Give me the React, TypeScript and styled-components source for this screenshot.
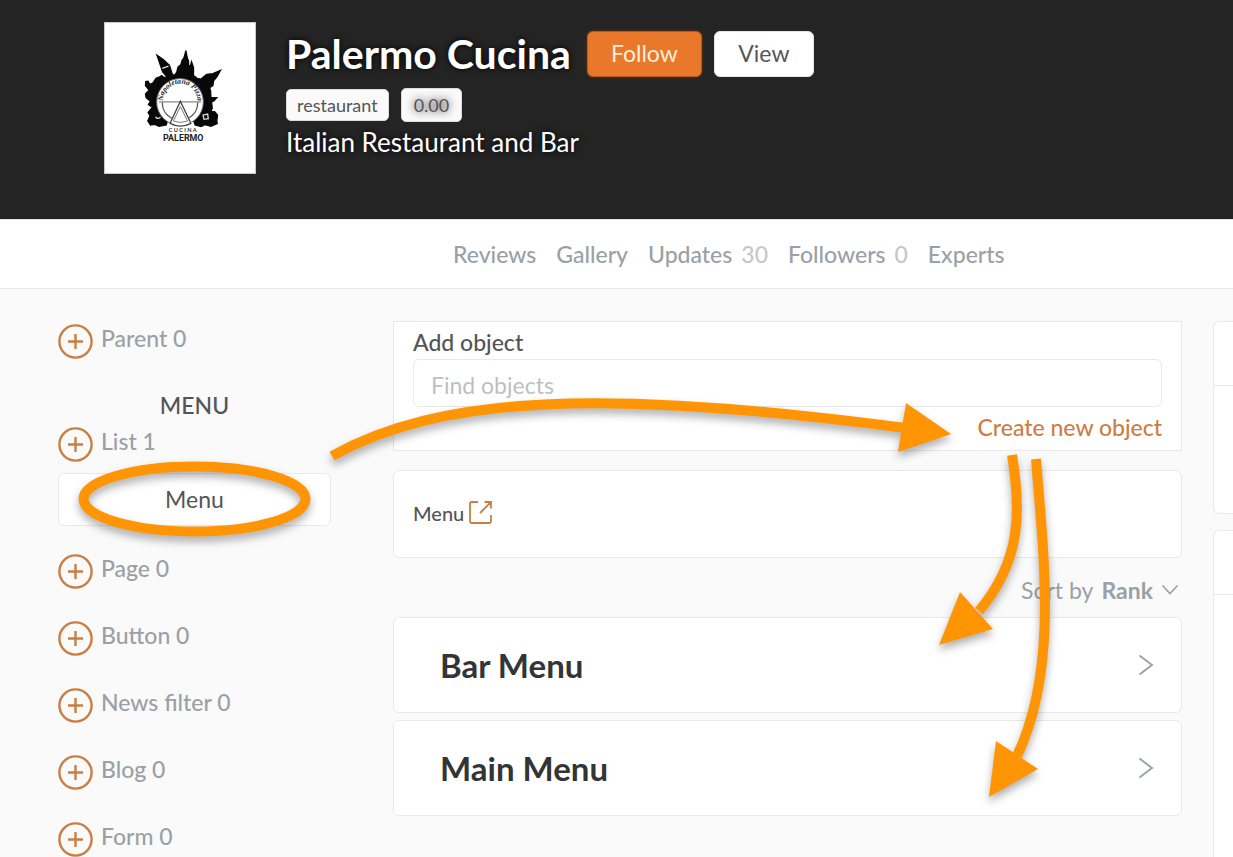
import React from "react";
import styled, { createGlobalStyle } from "styled-components";

const GlobalStyle = createGlobalStyle`
  *, *::before, *::after { box-sizing: border-box; }
  html, body { margin: 0; padding: 0; }
  body {
    background: #fafafa;
    color: #535557;
    font-family: Lato, "Liberation Sans", sans-serif;
    font-size: 23px;
    line-height: 32px;
  }
  button, input, select { font: inherit; color: inherit; }
  a { text-decoration: none; color: inherit; }
`;

const line = "#e7e9ea";
const muted = "#9aa1a6";
const accent = "#cb7e44";

const Page = styled.div`
  position: relative;
  display: flex;
  flex-direction: column;
  min-height: 100vh;
`;

const Header = styled.header`
  display: flex;
  gap: 30px;
  padding: 22px 24px 45px 104px;
  background: #242424;
`;

const Avatar = styled.div`
  flex: none;
  width: 152px;
  height: 152px;
  border: 1px solid #c8c8c8;
  background: #fff;

  svg { display: block; width: 100%; height: 100%; }
`;

const Identity = styled.div`
  color: #fff;
  text-shadow: 0 0 6px #000;
`;

const TitleRow = styled.div`
  display: flex;
  align-items: center;
  height: 63px;
`;

const Title = styled.h1`
  margin: 0 16px 0 0;
  font-size: 41px;
  line-height: 63px;
  font-weight: 700;
  white-space: nowrap;
`;

const HeaderButton = styled.button<{ $primary?: boolean; $width: number }>`
  width: ${(p) => p.$width}px;
  height: 46px;
  margin-right: 12px;
  padding: 0 0 2px;
  border: 1px solid ${(p) => (p.$primary ? "#b9581a" : "#e4e4e4")};
  border-radius: 6px;
  background: ${(p) => (p.$primary ? "#e9782a" : "#fff")};
  color: ${(p) => (p.$primary ? "#fdeedd" : "#55575a")};
  box-shadow: ${(p) => (p.$primary ? "0 0 3px #7a3300" : "none")};
`;

const Tags = styled.div`
  display: flex;
  align-items: center;
  gap: 12px;
  height: 39px;
`;

const Tag = styled.span<{ $glow?: boolean }>`
  padding: ${(p) => (p.$glow ? "3px 12px" : "2px 10px")};
  border: 1px solid #dcdcdc;
  border-radius: 5px;
  background: #fafafa;
  color: #555;
  font-size: 18px;
  line-height: 26px;
  text-shadow: ${(p) => (p.$glow ? "0 0 8px #000" : "none")};
`;

const Tagline = styled.p`
  margin: 0;
  font-size: 26px;
  line-height: 36px;
`;

const Nav = styled.nav`
  display: flex;
  align-items: center;
  gap: 20px;
  height: 70px;
  padding: 0 24px 0 453px;
  border-top: 1px solid #e2e2e2;
  border-bottom: 1px solid ${line};
  background: #fff;
  color: ${muted};
  font-weight: 500;
  white-space: nowrap;
`;

const NavCount = styled.span`
  margin-left: 9px;
  color: #c5c8ca;
`;

const Body = styled.div`
  flex: 1;
  display: grid;
  grid-template-columns: 273px minmax(0, 1fr) 20px;
  padding-left: 58px;
`;

const Sidebar = styled.aside`
  padding-top: 35px;
`;

const Group = styled.section`
  margin-bottom: 32px;
`;

const GroupRow = styled.div`
  display: flex;
  gap: 8px;
  height: 35px;
  color: ${muted};
  font-weight: 500;
  line-height: 28px;
`;

const AddButton = styled.button`
  flex: none;
  width: 35px;
  height: 35px;
  padding: 0;
  border: 0;
  background: none;
  color: ${accent};

  svg { display: block; }
`;

const SidebarTitle = styled.h2`
  margin: -2px 0 6px;
  font-size: 23px;
  line-height: 32px;
  font-weight: 500;
  text-align: center;
`;

const SidebarItem = styled.a`
  display: block;
  margin: 11px 0 28px;
  border: 1px solid ${line};
  border-radius: 6px;
  background: #fff;
  line-height: 51px;
  text-align: center;
`;

const Content = styled.main`
  padding: 32px 31px 0 62px;
`;

const AddCard = styled.section`
  display: flex;
  flex-direction: column;
  height: 130px;
  padding: 4px 19px 0;
  border: 1px solid ${line};
  background: #fff;
  font-weight: 500;
`;

const SearchInput = styled.input`
  width: 100%;
  height: 48px;
  margin-top: 1px;
  padding: 4px 17px 0;
  border: 1px solid ${line};
  border-radius: 6px;
  background: #fff;
  font-weight: 400;

  &::placeholder { color: #bdbfc1; opacity: 1; }
`;

const CreateLink = styled.a`
  align-self: flex-end;
  margin-top: 4px;
  color: ${accent};
`;

const CrumbCard = styled.section`
  display: flex;
  align-items: center;
  gap: 4px;
  height: 88px;
  margin-top: 19px;
  padding: 0 19px 2px;
  border: 1px solid ${line};
  border-radius: 6px;
  background: #fff;
  font-size: 20px;
  font-weight: 500;
`;

const OpenLink = styled.a`
  color: ${accent};

  svg { display: block; }
`;

const SortRow = styled.div`
  display: flex;
  justify-content: flex-end;
  align-items: center;
  gap: 8px;
  height: 59px;
  padding: 5px 3px 0 0;
  color: ${muted};
`;

const SortSelect = styled.select`
  appearance: none;
  field-sizing: content;
  padding: 0;
  border: 0;
  background: none;
  font-weight: 700;
`;

const MenuCard = styled.a`
  display: flex;
  align-items: center;
  justify-content: space-between;
  height: 96px;
  margin-bottom: 7px;
  padding: 0 27px 0 46px;
  border: 1px solid ${line};
  border-radius: 6px;
  background: #fff;
  color: ${muted};
`;

const MenuName = styled.h3`
  margin: 0;
  color: #333436;
  font-size: 33px;
  line-height: 48px;
  font-weight: 700;
`;

const Rail = styled.aside`
  display: flex;
  flex-direction: column;
  gap: 16px;
  padding-top: 32px;
`;

const RailCard = styled.section<{ $grow?: boolean }>`
  border: 1px solid ${line};
  border-right: 0;
  border-radius: ${(p) => (p.$grow ? "6px 0 0 0" : "6px 0 0 6px")};
  background: #fff;
  ${(p) => (p.$grow ? "flex: 1; border-bottom: 0;" : "height: 193px;")}
`;

const RailHead = styled.div`
  height: 64px;
  border-bottom: 1px solid ${line};
`;

const Annotations = styled.svg`
  position: absolute;
  inset: 0;
  width: 100%;
  height: 100%;
  pointer-events: none;
  filter: drop-shadow(0 5px 4px rgba(0, 0, 0, 0.32));
`;

function Logo() {
  return (
    <svg viewBox="12 20 456 456" role="img" aria-label="Napoletana Pizza Cucina Palermo">
      <path
        fill="#080808"
        stroke="#080808"
        strokeWidth="4"
        d="M150 330 142 318 149 302 143 292 156 276 144 268 150 258 137 247 135 236 146 224 135 210 136 198 143 197 148 207 158 202 167 188 178 184 184 180 192 186 200 184 187 168 181 150 170 118 189 131 208 149 216 174 222 180 230 170 234 154 243 146 246 134 252 126 258 104 262 126 266 136 266 150 272 150 275 138 281 155 281 180 292 188 303 191 321 176 340 174 363 164 352 184 342 196 340 210 330 217 333 226 334 246 352 247 343 257 336 260 338 279 334 289 346 290 354 300 352 316 353 326 334 334 316 329 304 335 286 330 276 300 206 304 198 330 176 334 164 328Z"
      />
      <circle cx="240" cy="260" r="71" fill="#fff" stroke="#666" strokeWidth="3" />
      <path d="M186 262a54 54 0 0 0 31 49M294 262a54 54 0 0 1-31 49" fill="none" stroke="#555" strokeWidth="4" />
      <path d="M176 260h128" stroke="#666" strokeWidth="3" />
      <path d="M200 340 241 262 286 340Z" fill="#fff" />
      <path d="M241 258 210 325q31 17 63 0Z" fill="#fff" stroke="#444" strokeWidth="4" />
      <path d="M241 274 220 318q21 9 43 0Z" fill="none" stroke="#777" strokeWidth="3" />
      <path d="m186 158 19-7M166 305q3 9 15 2M310 300l14-3 2 14-13 2z" fill="none" stroke="#ddd" strokeWidth="4" />
      <path id="logoArc" d="M188 257a52 52 0 0 1 105 0" fill="none" />
      <text fontFamily="Liberation Serif, serif" fontStyle="italic" fontWeight="700" fontSize="23" fill="#222">
        <textPath href="#logoArc" startOffset="50%" textAnchor="middle">Napoletana Pizza</textPath>
      </text>
      <text x="248" y="351" textAnchor="middle" fontFamily="Lato, sans-serif" fontWeight="700" fontSize="17" fill="#333">C U C I N A</text>
      <text x="250" y="378" textAnchor="middle" fontFamily="Roboto, sans-serif" fontWeight="700" fontSize="27" fill="#222">PALERMO</text>
    </svg>
  );
}

function PlusCircle() {
  return (
    <svg width="35" height="35" viewBox="0 0 35 35" fill="none" stroke="currentColor" strokeWidth="2.4" aria-hidden="true">
      <circle cx="17.5" cy="17.5" r="16.1" />
      <path d="M10 17.5h15M17.5 10v15" />
    </svg>
  );
}

function OpenIcon() {
  return (
    <svg width="25" height="26" viewBox="0 0 25 26" fill="none" stroke="currentColor" strokeWidth="1.8" aria-hidden="true">
      <path d="M10 2H3.5Q2 2 2 3.500V21.500Q2 23 3.500 23H21.500Q23 23 23 21.500V15M12 13 23 2M16.500 2H23V8.500" />
    </svg>
  );
}

function AddRow({ name, count }: { name: string; count: number }) {
  return (
    <GroupRow>
      <AddButton type="button" aria-label={`Add ${name}`}>
        <PlusCircle />
      </AddButton>
      <span>
        {name} {count}
      </span>
    </GroupRow>
  );
}

const tabs: { name: string; count?: number }[] = [
  { name: "Reviews" },
  { name: "Gallery" },
  { name: "Updates", count: 30 },
  { name: "Followers", count: 0 },
  { name: "Experts" },
];

const emptyGroups = ["Page", "Button", "News filter", "Blog"];

export default function App() {
  return (
    <Page>
      <GlobalStyle />
      <Header>
        <Avatar>
          <Logo />
        </Avatar>
        <Identity>
          <TitleRow>
            <Title>Palermo Cucina</Title>
            <HeaderButton type="button" $primary $width={115}>Follow</HeaderButton>
            <HeaderButton type="button" $width={100}>View</HeaderButton>
          </TitleRow>
          <Tags>
            <Tag>restaurant</Tag>
            <Tag $glow>0.00</Tag>
          </Tags>
          <Tagline>Italian Restaurant and Bar</Tagline>
        </Identity>
      </Header>

      <Nav>
        {tabs.map((t) => (
          <a href="#" key={t.name}>
            {t.name}
            {t.count !== undefined && <NavCount>{t.count}</NavCount>}
          </a>
        ))}
      </Nav>

      <Body>
        <Sidebar>
          <Group>
            <AddRow name="Parent" count={0} />
          </Group>
          <SidebarTitle>MENU</SidebarTitle>
          <AddRow name="List" count={1} />
          <SidebarItem href="#">Menu</SidebarItem>
          {emptyGroups.map((name) => (
            <Group key={name}>
              <AddRow name={name} count={0} />
            </Group>
          ))}
          <AddRow name="Form" count={0} />
        </Sidebar>

        <Content>
          <AddCard>
            <label htmlFor="find">Add object</label>
            <SearchInput id="find" type="text" placeholder="Find objects" />
            <CreateLink href="#">Create new object</CreateLink>
          </AddCard>
          <CrumbCard>
            <span>Menu</span>
            <OpenLink href="#" aria-label="Open menu">
              <OpenIcon />
            </OpenLink>
          </CrumbCard>
          <SortRow>
            <label htmlFor="sort">Sort by</label>
            <SortSelect id="sort">
              <option>Rank</option>
            </SortSelect>
            <svg width="18" height="12" viewBox="0 0 18 12" fill="none" stroke="currentColor" strokeWidth="1.600" aria-hidden="true">
              <path d="m1.500 1.500 7.500 8 7.500-8" />
            </svg>
          </SortRow>
          {["Bar Menu", "Main Menu"].map((name) => (
            <MenuCard href="#" key={name}>
              <MenuName>{name}</MenuName>
              <svg width="16" height="22" viewBox="0 0 16 22" fill="none" stroke="currentColor" strokeWidth="1.900" aria-hidden="true">
                <path d="m1.500 1.500 12.500 9.500-12.500 9.500" />
              </svg>
            </MenuCard>
          ))}
        </Content>

        <Rail>
          <RailCard>
            <RailHead />
          </RailCard>
          <RailCard $grow>
            <RailHead />
          </RailCard>
        </Rail>
      </Body>

      <Annotations aria-hidden="true">
        <g fill="none" stroke="#ff9504" strokeWidth="10">
          <ellipse cx="194.500" cy="499" rx="111" ry="32.500" />
          <path d="M332 456C440 396 600 388 905 428" />
          <path d="M1012 455C1021 510 1022 560 979 611" />
          <path d="M1036 459C1044 560 1058 670 1017 756" />
        </g>
        <g fill="#ff9504">
          <path d="M906 403 951 434 898 452Z" />
          <path d="M960 592 993 629 939 645Z" />
          <path d="M996 741 1038 769 989 797Z" />
        </g>
      </Annotations>
    </Page>
  );
}
